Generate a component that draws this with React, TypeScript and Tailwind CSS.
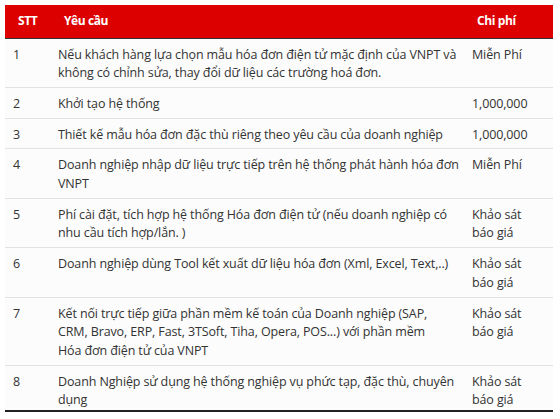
import React from "react";

type Row = { stt: string; req: string[]; cost: string[] };

const rows: Row[] = [
  {
    stt: "1",
    req: [
      "Nếu khách hàng lựa chọn mẫu hóa đơn điện tử mặc định của VNPT và",
      "không có chỉnh sửa, thay đổi dữ liệu các trường hoá đơn.",
    ],
    cost: ["Miễn Phí"],
  },
  { stt: "2", req: ["Khởi tạo hệ thống"], cost: ["1,000,000"] },
  {
    stt: "3",
    req: ["Thiết kế mẫu hóa đơn đặc thù riêng theo yêu cầu của doanh nghiệp"],
    cost: ["1,000,000"],
  },
  {
    stt: "4",
    req: ["Doanh nghiệp nhập dữ liệu trực tiếp trên hệ thống phát hành hóa đơn", "VNPT"],
    cost: ["Miễn Phí"],
  },
  {
    stt: "5",
    req: [
      "Phí cài đặt, tích hợp hệ thống Hóa đơn điện tử (nếu doanh nghiệp có",
      "nhu cầu tích hợp/lắn. )",
    ],
    cost: ["Khảo sát", "báo giá"],
  },
  {
    stt: "6",
    req: ["Doanh nghiệp dùng Tool kết xuất dữ liệu hóa đơn (Xml, Excel, Text,..)"],
    cost: ["Khảo sát", "báo giá"],
  },
  {
    stt: "7",
    req: [
      "Kết nối trực tiếp giữa phần mềm kế toán của Doanh nghiệp (SAP,",
      "CRM, Bravo, ERP, Fast, 3TSoft, Tiha, Opera, POS...) với phần mềm",
      "Hóa đơn điện tử của VNPT",
    ],
    cost: ["Khảo sát", "báo giá"],
  },
  {
    stt: "8",
    req: ["Doanh Nghiệp sử dụng hệ thống nghiệp vụ phức tạp, đặc thù, chuyên", "dụng"],
    cost: ["Khảo sát", "báo giá"],
  },
];

const Lines = ({ lines }: { lines: string[] }) => (
  <>
    {lines.map((l, i) => (
      <div key={i} className="whitespace-nowrap">
        {l}
      </div>
    ))}
  </>
);

const App = () => {
  return (
    <div
      className="w-[560px] h-[419px] bg-white pt-[5px] pl-[5px] overflow-hidden"
      style={{ fontFamily: '"Open Sans", "Noto Sans", sans-serif' }}
    >
      <table className="w-[548px] border-collapse table-fixed border-b-2 border-b-[#222] bg-[#fcfcfc]">
        <colgroup>
          <col className="w-[45px]" />
          <col className="w-[414px]" />
          <col className="w-[89px]" />
        </colgroup>
        <thead>
          <tr className="bg-[#dc0000] text-white text-[12px] font-bold h-[33px] border-b border-b-[#333]">
            <th className="text-left pl-[13px] pr-2 tracking-[-0.4px]">STT</th>
            <th className="text-left pl-[14px] pr-2 tracking-[-0.4px]">Yêu cầu</th>
            <th className="text-left pl-[13px] pr-2 tracking-[-0.4px]">Chi phí</th>
          </tr>
        </thead>
        <tbody className="text-[12.5px] leading-[18.7px] text-[#333] tracking-[-0.12px]">
          {rows.map((r, i) => {
            const cell = i === rows.length - 1 ? "px-2 pt-[7px] pb-0" : "px-2 pt-[7px] pb-[4px]";
            return (
              <tr key={r.stt} className="border-b border-b-[#e2e2e2] last:border-b-0 align-top">
                <td className={cell}>{r.stt}</td>
                <td className={cell}>
                  <Lines lines={r.req} />
                </td>
                <td className={cell}>
                  <Lines lines={r.cost} />
                </td>
              </tr>
            );
          })}
        </tbody>
      </table>
    </div>
  );
};

export default App;
